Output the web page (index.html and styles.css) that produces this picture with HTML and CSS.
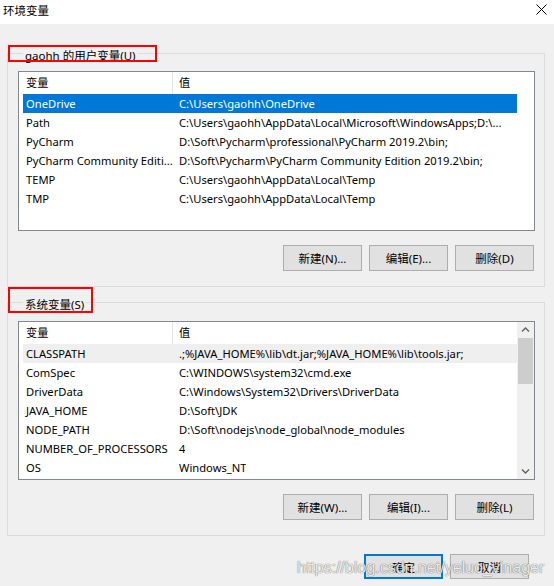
FILE: index.html
```html
<!DOCTYPE html>
<html lang="zh-CN">
<head>
  <meta charset="UTF-8" />
  <title>环境变量</title>
  <link rel="stylesheet" href="styles.css">
</head>
<body>
  <div class="window">
    <div class="titlebar">
      <span class="title">环境变量</span>
      <svg class="close" width="11" height="11" viewBox="0 0 11 11">
        <path d="M0.5 0.5 L10.5 10.5 M10.5 0.5 L0.5 10.5" stroke="#000" stroke-width="1" fill="none"/>
      </svg>
    </div>

    <section class="group">
      <div class="group-title">gaohh 的用户变量(U)</div>
      <span class="mark mark-user"></span>
      <div class="list">
        <div class="list-body">
          <div class="list-head"><span class="col-name">变量</span><span class="col-value">值</span></div>
          <div class="row selected"><span class="col-name">OneDrive</span><span class="col-value">C:\Users\gaohh\OneDrive</span></div>
          <div class="row"><span class="col-name">Path</span><span class="col-value">C:\Users\gaohh\AppData\Local\Microsoft\WindowsApps;D:\...</span></div>
          <div class="row"><span class="col-name">PyCharm</span><span class="col-value">D:\Soft\Pycharm\professional\PyCharm 2019.2\bin;</span></div>
          <div class="row"><span class="col-name">PyCharm Community Editi...</span><span class="col-value">D:\Soft\Pycharm\PyCharm Community Edition 2019.2\bin;</span></div>
          <div class="row"><span class="col-name">TEMP</span><span class="col-value">C:\Users\gaohh\AppData\Local\Temp</span></div>
          <div class="row"><span class="col-name">TMP</span><span class="col-value">C:\Users\gaohh\AppData\Local\Temp</span></div>
        </div>
      </div>
      <div class="buttons">
        <button class="btn">新建(N)...</button>
        <button class="btn">编辑(E)...</button>
        <button class="btn">删除(D)</button>
      </div>
    </section>

    <section class="group group-sys">
      <div class="group-title">系统变量(S)</div>
      <span class="mark mark-sys"></span>
      <div class="list">
        <div class="list-body">
          <div class="list-head"><span class="col-name">变量</span><span class="col-value">值</span></div>
          <div class="row hover"><span class="col-name">CLASSPATH</span><span class="col-value">.;%JAVA_HOME%\lib\dt.jar;%JAVA_HOME%\lib\tools.jar;</span></div>
          <div class="row"><span class="col-name">ComSpec</span><span class="col-value">C:\WINDOWS\system32\cmd.exe</span></div>
          <div class="row"><span class="col-name">DriverData</span><span class="col-value">C:\Windows\System32\Drivers\DriverData</span></div>
          <div class="row"><span class="col-name">JAVA_HOME</span><span class="col-value">D:\Soft\JDK</span></div>
          <div class="row"><span class="col-name">NODE_PATH</span><span class="col-value">D:\Soft\nodejs\node_global\node_modules</span></div>
          <div class="row"><span class="col-name">NUMBER_OF_PROCESSORS</span><span class="col-value">4</span></div>
          <div class="row"><span class="col-name">OS</span><span class="col-value">Windows_NT</span></div>
        </div>
        <div class="scrollbar">
          <svg class="arrow" width="17" height="16" viewBox="0 0 17 16">
            <path d="M5 9.5 L8.5 6 L12 9.5" stroke="#606060" stroke-width="1.4" fill="none"/>
          </svg>
          <div class="track"><div class="thumb"></div></div>
          <svg class="arrow" width="17" height="16" viewBox="0 0 17 16">
            <path d="M5 6.5 L8.5 10 L12 6.5" stroke="#606060" stroke-width="1.4" fill="none"/>
          </svg>
        </div>
      </div>
      <div class="buttons">
        <button class="btn">新建(W)...</button>
        <button class="btn">编辑(I)...</button>
        <button class="btn">删除(L)</button>
      </div>
    </section>

    <div class="footer">
      <button class="btn btn-default">确定</button>
      <button class="btn">取消</button>
    </div>

    <div class="watermark">https://blog.csdn.net/yeluo_vinager</div>
  </div>
</body>
</html>
```

FILE: styles.css
```css
* {
  box-sizing: border-box;
}
body {
  margin: 0;
  background: #f0f0f0;
  font-family: "Noto Sans", "Noto Sans CJK SC", sans-serif;
  font-size: 11.2px;
  line-height: 16px;
  color: #000;
}
.window {
  position: relative;
  width: 554px;
  height: 586px;
  overflow: hidden;
}
.titlebar {
  height: 24px;
  background: #fff;
  display: flex;
  align-items: center;
  justify-content: space-between;
  padding: 0 7px 2px 3px;
}
.title {
  font-size: 11.5px;
  line-height: 20px;
}
.close {
  margin-top: -3px;
}
.group {
  position: relative;
  margin: 29px 9px 0 7px;
  border: 1px solid #dcdcdc;
  padding: 0 9px 15px 10px;
}
.group-sys {
  margin-top: 15px;
}
.group-sys .list {
  margin-top: 8px;
  height: 159px;
}
.group-title {
  width: fit-content;
  height: 16px;
  margin: -6px 0 0 5px;
  padding: 0 2px;
  background: #f0f0f0;
  font-size: 11.5px;
  line-height: 16px;
}
.mark {
  position: absolute;
  left: 0;
  border: 2px solid #f00;
}
.mark-user {
  top: -9px;
  width: 149px;
  height: 17px;
}
.mark-sys {
  top: -16px;
  width: 85px;
  height: 26px;
}
.list {
  margin-top: 7px;
  height: 160px;
  border: 1px solid #828790;
  background: #fff;
  display: flex;
  padding-left: 4px;
}
.list-body {
  width: 494px;
  overflow: hidden;
}
.list-head {
  display: flex;
  height: 22px;
  line-height: 22px;
}
.list-head .col-name {
  border-right: 1px solid #e5e5e5;
}
.row {
  display: flex;
  height: 19px;
  line-height: 19px;
  white-space: nowrap;
}
.col-name {
  width: 150px;
  flex: none;
  padding-left: 3px;
  overflow: hidden;
  white-space: nowrap;
}
.col-value {
  padding-left: 6px;
  overflow: hidden;
  white-space: nowrap;
}
.row.selected {
  background: #0078d7;
  color: #fff;
}
.row.hover {
  background: #efefef;
}
.scrollbar {
  width: 17px;
  margin-left: auto;
  background: #f0f0f0;
  display: flex;
  flex-direction: column;
}
.arrow {
  flex: none;
  display: block;
}
.track {
  flex: 1;
  padding: 0 1px;
}
.thumb {
  height: 46px;
  background: #cdcdcd;
}
.buttons {
  display: flex;
  justify-content: flex-end;
  gap: 7px;
  margin-top: 14px;
  padding-right: 1px;
}
.btn {
  width: 79px;
  height: 26px;
  background: #e1e1e1;
  border: 1px solid #adadad;
  font-family: inherit;
  font-size: 11.5px;
  color: #000;
  padding: 0;
}
.footer {
  display: flex;
  justify-content: flex-end;
  gap: 7px;
  margin-top: 18px;
  padding-right: 25px;
}
.footer .btn {
  height: 25px;
}
.btn-default {
  border-color: #0078d7;
  box-shadow: inset 0 0 0 1px #0078d7;
}
.watermark {
  position: absolute;
  left: 297px;
  top: 559px;
  font-family: "Liberation Sans", Arial, sans-serif;
  font-size: 16px;
  line-height: 18px;
  color: rgba(255, 255, 255, 0.9);
  text-shadow: 0 0 1px rgba(0, 0, 0, 0.55), 0 0 1px rgba(0, 0, 0, 0.35);
  white-space: nowrap;
  pointer-events: none;
}
```
